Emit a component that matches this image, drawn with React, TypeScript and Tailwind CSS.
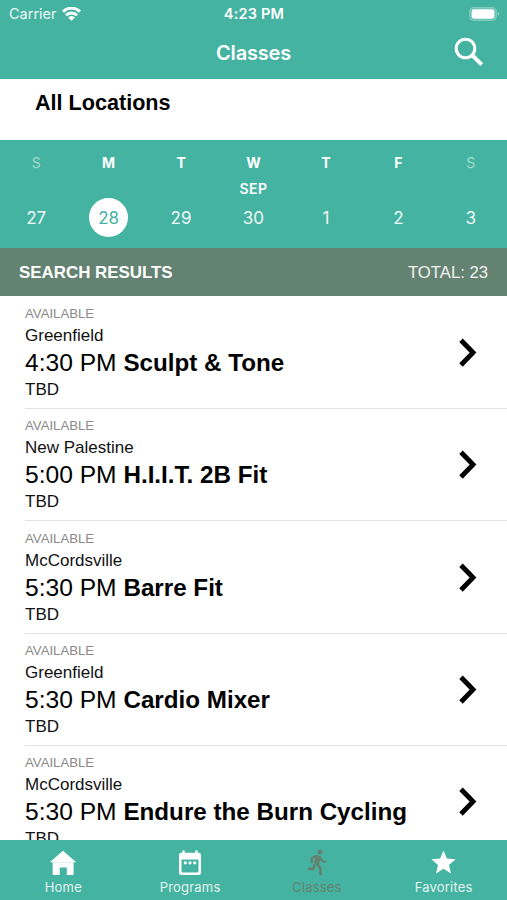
import { MdStar } from 'react-icons/md';
import clsx from 'clsx';

interface Day {
  letter: string;
  date: number;
  month?: string;
  weekend?: boolean;
  selected?: boolean;
}

interface ClassItem {
  location: string;
  time: string;
  name: string;
}

const DAYS: Day[] = [
  { letter: 'S', date: 27, weekend: true },
  { letter: 'M', date: 28, selected: true },
  { letter: 'T', date: 29 },
  { letter: 'W', date: 30, month: 'SEP' },
  { letter: 'T', date: 1 },
  { letter: 'F', date: 2 },
  { letter: 'S', date: 3, weekend: true },
];

const CLASSES: ClassItem[] = [
  { location: 'Greenfield', time: '4:30 PM', name: 'Sculpt & Tone' },
  { location: 'New Palestine', time: '5:00 PM', name: 'H.I.I.T. 2B Fit' },
  { location: 'McCordsville', time: '5:30 PM', name: 'Barre Fit' },
  { location: 'Greenfield', time: '5:30 PM', name: 'Cardio Mixer' },
  { location: 'McCordsville', time: '5:30 PM', name: 'Endure the Burn Cycling' },
];

function WifiIcon() {
  return (
    <svg width="19" height="14" viewBox="0 0 19 14" fill="none" stroke="#fff" strokeWidth="2.9">
      <path d="M1 4.6a12.2 12.2 0 0 1 17 0" />
      <path d="M4 8.2a7.9 7.9 0 0 1 11 0" />
      <path d="M9.5 13.8 6.1 10.6a4.6 4.6 0 0 1 6.8 0z" fill="#fff" stroke="none" />
    </svg>
  );
}

function BatteryIcon() {
  return (
    <svg width="31" height="14" viewBox="0 0 31 14">
      <rect x="0.7" y="0.7" width="26.6" height="12.6" rx="4" fill="#fff" fillOpacity="0.15" stroke="#fff" strokeOpacity="0.3" strokeWidth="1.2" />
      <rect x="2.6" y="2.3" width="22.8" height="9.4" rx="2.4" fill="#fff" />
      <path d="M28.8 5v4c1.5-.6 1.5-3.4 0-4z" fill="#fff" fillOpacity="0.5" />
    </svg>
  );
}

function SearchIcon() {
  return (
    <svg width="30" height="30" viewBox="0 0 30 30" fill="none" stroke="currentColor">
      <circle cx="11.5" cy="11.5" r="9.3" strokeWidth="3" />
      <path d="m18 18 9.7 9.7" strokeWidth="4" />
    </svg>
  );
}

function HomeIcon() {
  return (
    <svg width="28" height="26" viewBox="0 0 28 26" fill="currentColor">
      <path d="M14 .8.8 12.3h26.4z" />
      <path d="M3.6 12.3h21v11.5q0 1.2-1.2 1.2h-5.6v-7.6h-7.1V25H4.8q-1.2 0-1.2-1.2z" />
    </svg>
  );
}

function CalendarIcon() {
  return (
    <svg width="24" height="26" viewBox="0 0 24 26" fill="currentColor">
      <path
        fillRule="evenodd"
        d="M4.3.6h2.4v2.2h10.6V.6h2.4v2.2h.8q2.5 0 2.5 2.5v17.2q0 2.5-2.5 2.5h-17Q1 25 1 22.5V5.3q0-2.5 2.5-2.5h.8zM3.5 9.5V21q0 1.5 1.5 1.5h14q1.5 0 1.5-1.5V9.5z"
      />
      <path d="M5.9 11.6h2.8v2.6H5.9zM10.6 11.6h2.8v2.6h-2.8zM15.3 11.6h2.8v2.6h-2.8z" />
    </svg>
  );
}

function RunnerIcon() {
  return (
    <svg width="20" height="27" viewBox="0 0 20 27" fill="none" stroke="currentColor" strokeLinejoin="round">
      <circle cx="13" cy="2.9" r="2.5" fill="currentColor" stroke="none" />
      <path d="M11.5 6.5 9.3 15" strokeWidth="5.4" />
      <path d="M10 6.7 4.7 9v5.2M12.5 7.5l2.3 4 4.2 1.7" strokeWidth="2.2" />
      <path d="m10 15 3.3 4.2.3 7M7.8 15.2l-1.6 5-5.4-.7" strokeWidth="2.7" />
    </svg>
  );
}

const TABS = [
  { label: 'Home', icon: <HomeIcon /> },
  { label: 'Programs', icon: <CalendarIcon /> },
  { label: 'Classes', icon: <RunnerIcon />, active: true },
  { label: 'Favorites', icon: <MdStar className="size-[29px]" /> },
];

function Header() {
  return (
    <header className="h-[79px] shrink-0 bg-[#45b3a1] font-['Inter',sans-serif] text-white">
      <div className="grid h-[27px] grid-cols-[1fr_80px_1fr] items-center pl-[8px] pr-[7px]">
        <div className="flex items-center gap-[5px] pl-px text-[14.5px] leading-[20px] text-white/90">
          <span>Carrier</span>
          <WifiIcon />
        </div>
        <span className="text-center text-[14.5px] font-semibold tracking-[0.2px]">4:23 PM</span>
        <div className="flex justify-end">
          <BatteryIcon />
        </div>
      </div>
      <div className="grid h-[50px] grid-cols-[53px_1fr_53px] items-center">
        <h1 className="col-start-2 pt-px text-center text-[20px] font-semibold tracking-[-0.2px]">Classes</h1>
        <button type="button" aria-label="Search">
          <SearchIcon />
        </button>
      </div>
    </header>
  );
}

function WeekStrip() {
  return (
    <div className="grid h-[108px] shrink-0 grid-cols-7 bg-[#45b3a1] font-['Inter',sans-serif] text-white">
      {DAYS.map((day) => (
        <div key={day.date} className="flex flex-col items-center pt-[13px]">
          <span className={clsx('h-[19px] text-[14px] leading-[19px]', day.weekend ? 'text-white/50' : 'font-bold')}>
            {day.letter}
          </span>
          <span className="mt-2 h-[18px] text-[14px] font-semibold leading-[18px] tracking-[0.5px]">{day.month}</span>
          <span
            className={clsx(
              'flex size-[39px] items-center justify-center rounded-full pt-0.5 text-[17px]',
              day.selected ? 'bg-white text-[#45b3a1]' : 'text-white/90',
            )}
          >
            {day.date}
          </span>
        </div>
      ))}
    </div>
  );
}

function ClassRow({ item }: { item: ClassItem }) {
  return (
    <li className="ml-[25px] flex h-[112.4px] shrink-0 items-center border-b border-[#e3e3e3] pr-[28px] pt-px">
      <div className="flex-1">
        <p className="text-[13.2px] leading-[18px] text-[#8a8a8a]">AVAILABLE</p>
        <p className="text-[17px] leading-[25px] text-[#111]">{item.location}</p>
        <p className="whitespace-nowrap text-[24.6px] leading-[30px]">
          {item.time} <b className="text-[24.2px]">{item.name}</b>
        </p>
        <p className="text-[17px] leading-[23px] text-[#111]">TBD</p>
      </div>
      <svg width="22" height="30" viewBox="0 0 22 30" fill="none" stroke="#000" strokeWidth="4.9">
        <path d="M4 2.2 16 14.6 4 27" />
      </svg>
    </li>
  );
}

function TabBar() {
  return (
    <nav className="grid h-[60px] shrink-0 grid-cols-4 bg-[#45b3a1] font-['Inter',sans-serif]">
      {TABS.map((tab) => (
        <div
          key={tab.label}
          className={clsx('flex flex-col items-center pt-[7px]', tab.active ? 'text-[#648272]' : 'text-white')}
        >
          <div className="flex h-[31px] items-center">{tab.icon}</div>
          <span className={clsx('text-[13px] leading-[18px] tracking-[0.2px]', !tab.active && 'text-white/85')}>
            {tab.label}
          </span>
        </div>
      ))}
    </nav>
  );
}

export default function App() {
  return (
    <div className="flex h-[900px] w-[507px] flex-col overflow-hidden bg-white font-['Liberation_Sans',Arial,sans-serif] text-black">
      <Header />
      <div className="h-[61px] shrink-0 pl-[35px] pt-[9px]">
        <h2 className="text-[21.6px] font-bold leading-[30px]">All Locations</h2>
      </div>
      <WeekStrip />
      <div className="flex h-[48px] shrink-0 items-center justify-between bg-[#648272] px-[19px] pt-0.5 text-[16.9px] text-white">
        <span className="font-bold">SEARCH RESULTS</span>
        <span className="text-[16.7px] text-white/90">TOTAL: 23</span>
      </div>
      <ul className="flex min-h-0 flex-1 flex-col overflow-hidden pt-[0.6px]">
        {CLASSES.map((item, i) => (
          <ClassRow key={i} item={item} />
        ))}
      </ul>
      <TabBar />
    </div>
  );
}
